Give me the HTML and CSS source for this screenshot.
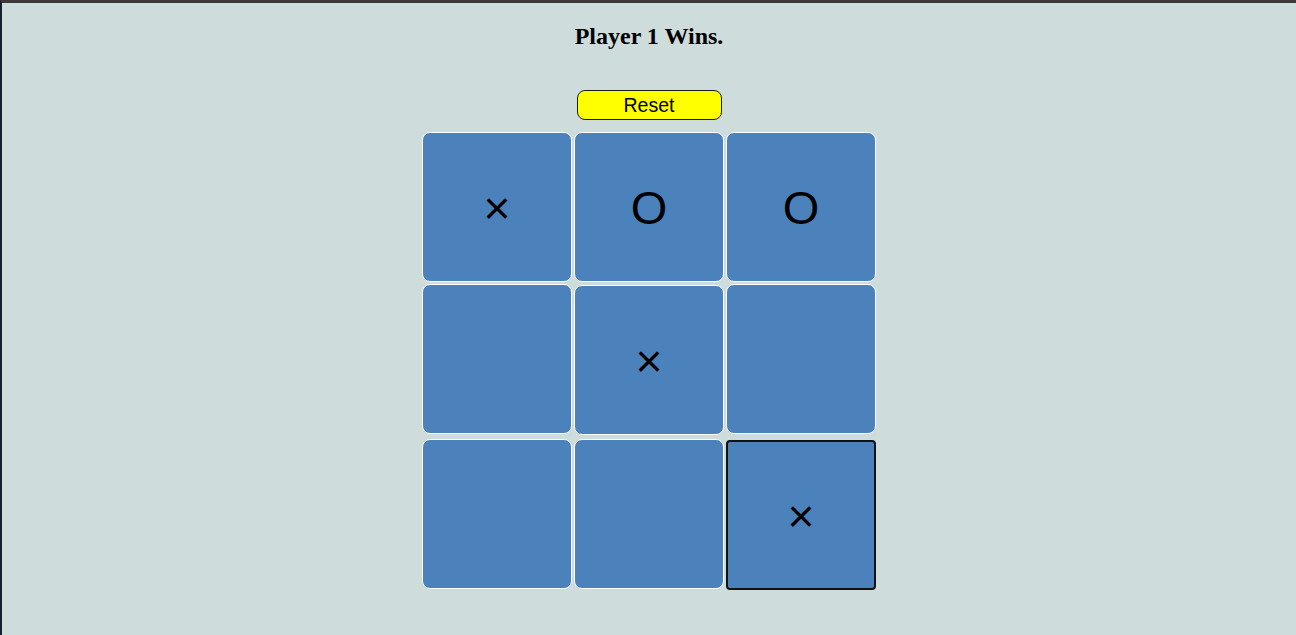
FILE: index.html
```html
<!DOCTYPE html>
<html lang="en">
<head>
<meta charset="utf-8">
<title>Tic Tac Toe</title>
<link rel="stylesheet" href="styles.css">
</head>
<body>
<div class="page">
  <h2 class="status">Player 1 Wins.</h2>
  <button class="reset">Reset</button>
  <div class="board">
    <div class="row">
      <button class="cell">×</button>
      <button class="cell">O</button>
      <button class="cell">O</button>
    </div>
    <div class="row">
      <button class="cell"></button>
      <button class="cell nudge">×</button>
      <button class="cell"></button>
    </div>
    <div class="row last-row">
      <button class="cell"></button>
      <button class="cell"></button>
      <button class="cell focused">×</button>
    </div>
  </div>
</div>
</body>
</html>
```
FILE: styles.css
```css
html, body {
  margin: 0;
  padding: 0;
  height: 100%;
}

.page {
  box-sizing: border-box;
  min-height: 100vh;
  background: #cfdcdc;
  border-top: 3px solid #3a3a3a;
  border-left: 2px solid #15212c;
  display: flex;
  flex-direction: column;
  align-items: center;
}

.status {
  font-family: "Liberation Serif", "Times New Roman", serif;
  font-weight: bold;
  font-size: 24px;
  line-height: 28px;
  margin: 19px 0 0 0;
  color: #000;
}

.reset {
  margin-top: 40px;
  width: 145px;
  height: 30px;
  box-sizing: border-box;
  background: #ffff00;
  border: 1px solid #1a1a1a;
  border-radius: 8px;
  font-family: "Liberation Sans", Arial, sans-serif;
  font-size: 19.5px;
  color: #000;
  padding: 0;
}

.board {
  margin-top: 12px;
  display: flex;
  flex-direction: column;
  gap: 2px;
}

.row {
  display: flex;
  gap: 2px;
  align-items: flex-start;
}

.last-row {
  margin-top: 2px;
}

.cell {
  box-sizing: border-box;
  width: 150px;
  height: 150px;
  background: #4c82bc;
  border: 1px solid #ffffff;
  border-radius: 8px;
  padding: 0;
  display: flex;
  align-items: center;
  justify-content: center;
  font-family: "Liberation Sans", Arial, sans-serif;
  font-size: 47px;
  color: #000;
}

.nudge {
  margin-top: 1px;
}

.focused {
  border: 2px solid #111111;
  border-radius: 4px;
  margin-top: 1px;
}
```
